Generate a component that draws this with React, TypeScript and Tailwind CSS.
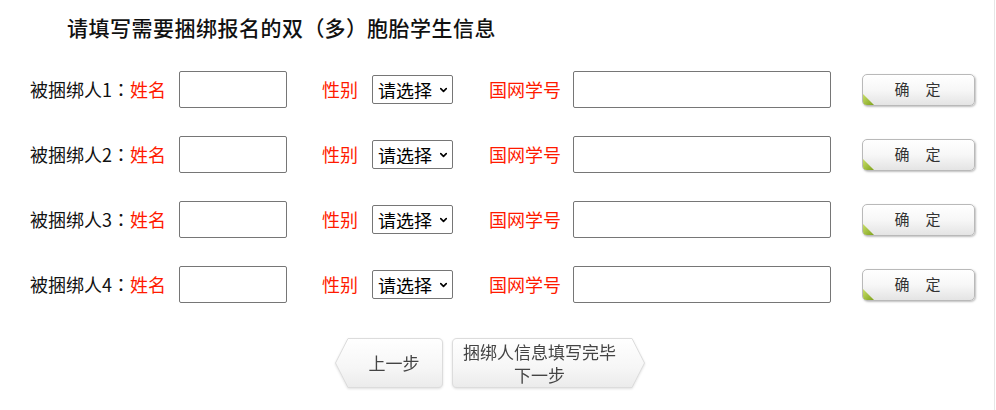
import { ChevronDown } from 'lucide-react';

const FONT = '"Noto Sans CJK SC", "Noto Sans", sans-serif';
// centred full-width punctuation, as in the screenshot
const PUNCT = '"Noto Sans CJK TC", "Noto Sans CJK SC", sans-serif';

type Row = { no: number };

const rows: Row[] = [{ no: 1 }, { no: 2 }, { no: 3 }, { no: 4 }];

function P({ children }: { children: string }) {
  return (
    <span className="inline-block w-[1em] text-center" style={{ fontFamily: PUNCT }}>
      {children}
    </span>
  );
}

function ConfirmButton() {
  return (
    <button
      type="button"
      className="relative ml-[31px] flex h-[32px] w-[113px] items-center justify-center gap-[16px] overflow-hidden rounded-[5px] border border-[#b9b9b9] bg-gradient-to-b from-white via-[#f7f7f7] to-[#e4e4e4] pr-[2px] text-[15px] text-[#333] shadow-[1px_1px_2px_rgba(0,0,0,0.25)]"
    >
      <span>确</span>
      <span>定</span>
      {/* green corner */}
      <svg className="absolute bottom-0 left-0" width="11" height="11" viewBox="0 0 11 11">
        <defs>
          <linearGradient id="gc" x1="0" y1="0" x2="1" y2="1">
            <stop offset="0" stopColor="#c9df6a" />
            <stop offset="1" stopColor="#7fa21c" />
          </linearGradient>
        </defs>
        <polygon points="0,0 11,11 0,11" fill="url(#gc)" />
      </svg>
    </button>
  );
}

function FormRow({ no }: Row) {
  return (
    <div className="flex h-[65px] items-center pl-[30px] text-[18px]">
      <span className="w-[136px] whitespace-nowrap text-[#111]">
        被捆绑人{no}
        <P>：</P>
        <span className="text-[#ff1a00]">姓名</span>
      </span>
      <input
        type="text"
        className="ml-[13px] h-[37px] w-[108px] rounded-[2px] border border-[#767676] bg-white outline-none"
      />
      <span className="ml-[35px] text-[#ff1a00]">性别</span>
      <div className="relative ml-[14px] h-[29px] w-[81px]">
        <select
          defaultValue=""
          className="h-full w-full appearance-none rounded-[2px] border border-[#767676] bg-white pl-[5px] text-[18px] leading-none text-black outline-none"
          style={{ fontFamily: FONT }}
        >
          <option value="">请选择</option>
          <option value="m">男</option>
          <option value="f">女</option>
        </select>
        <ChevronDown
          className="pointer-events-none absolute right-[4px] top-1/2 h-[11px] w-[11px] -translate-y-1/2 text-black"
          strokeWidth={3.5}
        />
      </div>
      <span className="ml-[36px] text-[#ff1a00]">国网学号</span>
      <input
        type="text"
        className="ml-[12px] h-[37px] w-[258px] rounded-[2px] border border-[#767676] bg-white outline-none"
      />
      <ConfirmButton />
    </div>
  );
}

function ArrowShape({ dir, w }: { dir: 'left' | 'right'; w: number }) {
  const h = 50;
  const d = 13;
  const path =
    dir === 'left'
      ? `M${d},0.5 L${w - 5},0.5 Q${w - 0.5},0.5 ${w - 0.5},5 L${w - 0.5},${h - 5} Q${w - 0.5},${h - 0.5} ${w - 5},${h - 0.5} L${d},${h - 0.5} L0.5,${h / 2} Z`
      : `M5,0.5 L${w - d},0.5 L${w - 0.5},${h / 2} L${w - d},${h - 0.5} L5,${h - 0.5} Q0.5,${h - 0.5} 0.5,${h - 5} L0.5,5 Q0.5,0.5 5,0.5 Z`;
  return (
    <svg className="absolute inset-0" width={w} height={h} viewBox={`0 0 ${w} ${h}`}>
      <defs>
        <linearGradient id={`bg-${dir}`} x1="0" y1="0" x2="0" y2="1">
          <stop offset="0" stopColor="#ffffff" />
          <stop offset="0.6" stopColor="#f6f6f6" />
          <stop offset="1" stopColor="#ebebeb" />
        </linearGradient>
      </defs>
      <path d={path} fill={`url(#bg-${dir})`} stroke="#dcdcdc" strokeWidth="1" />
    </svg>
  );
}

export default function App() {
  return (
    <div
      className="h-[410px] w-[995px] border-r border-[#e6e6e6] bg-white"
      style={{ fontFamily: FONT }}
    >
      <div className="flex h-[57px] items-center pl-[67px] pb-[1px]">
        <h1 className="text-[21px] font-medium tracking-[0.5px] text-[#111]">
          请填写需要捆绑报名的双<P>（</P>多<P>）</P>胞胎学生信息
        </h1>
      </div>

      {rows.map((r) => (
        <FormRow key={r.no} no={r.no} />
      ))}

      <div className="mt-[21px] flex pl-[335px]">
        <button
          type="button"
          className="relative h-[50px] w-[108px] drop-shadow-[0_1px_1px_rgba(0,0,0,0.12)]"
        >
          <ArrowShape dir="left" w={108} />
          <span className="relative block pl-[10px] text-[17px] text-[#444]">上一步</span>
        </button>
        <button
          type="button"
          className="relative ml-[9px] h-[50px] w-[193px] drop-shadow-[0_1px_1px_rgba(0,0,0,0.12)]"
        >
          <ArrowShape dir="right" w={193} />
          <span className="relative flex flex-col items-center pr-[18px] text-[17px] leading-[23px] text-[#444]">
            <span>捆绑人信息填写完毕</span>
            <span>下一步</span>
          </span>
        </button>
      </div>
    </div>
  );
}
